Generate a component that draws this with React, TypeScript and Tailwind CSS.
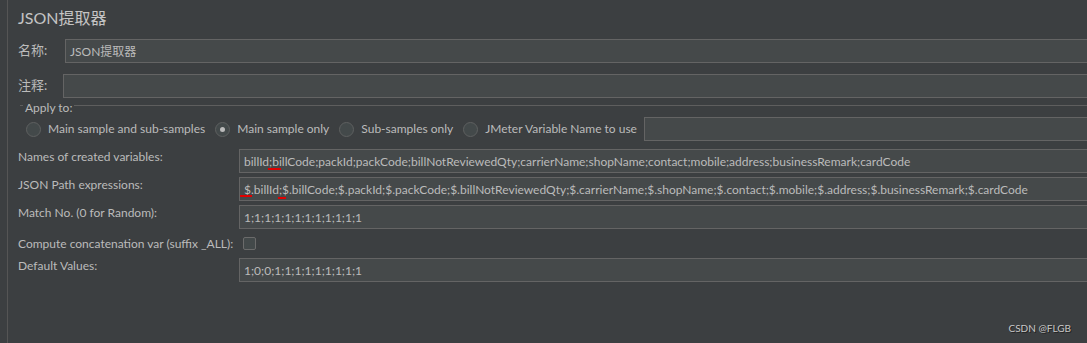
import type { ReactNode } from 'react';

const FONT = { fontFamily: 'Lato, "Noto Sans CJK SC", sans-serif' };

const NAMES_REST =
  'billCode;packId;packCode;billNotReviewedQty;carrierName;shopName;contact;mobile;address;businessRemark;cardCode';
const PATHS_REST =
  '$.billCode;$.packId;$.packCode;$.billNotReviewedQty;$.carrierName;$.shopName;$.contact;$.mobile;$.address;$.businessRemark;$.cardCode';

function Field({ children }: { children?: ReactNode }) {
  return (
    <div className="flex h-[24px] flex-1 items-center border-y border-l border-[#646464] bg-[#45494a] pt-[2px] pl-[4px] text-[12px] whitespace-nowrap text-[#bbbbbb]">
      {children}
    </div>
  );
}

// red hand-drawn marks from the screenshot
function Marked({ text, width, offset = 0, top = 14 }: { text: string; width: number; offset?: number; top?: number }) {
  return (
    <span className="relative">
      {text}
      <span
        className="absolute h-[2px] bg-[#e00000]"
        style={{ left: offset, width, top }}
      />
    </span>
  );
}

function Radio({ label, checked = false }: { label: string; checked?: boolean }) {
  return (
    <div className="flex items-center gap-[7px]">
      <span className="flex h-[15px] w-[15px] items-center justify-center rounded-full border border-[#5e6060] bg-[#43494a]">
        {checked && <span className="h-[5px] w-[5px] rounded-full bg-[#bbbbbb]" />}
      </span>
      <span>{label}</span>
    </div>
  );
}

function Row({ label, children }: { label: string; children: ReactNode }) {
  return (
    <div className="flex h-[24px] items-start">
      <span className="w-[221px] shrink-0 leading-[16px] whitespace-nowrap">{label}</span>
      {children}
    </div>
  );
}

export default function App() {
  return (
    <div
      className="relative flex h-[343px] w-[1087px] overflow-hidden bg-[#3c3f41] text-[12px] text-[#bbbbbb]"
      style={FONT}
    >
      {/* splitter */}
      <div className="w-[7px] shrink-0" />
      <div className="w-px shrink-0 bg-[#555555]" />

      <div className="flex flex-1 flex-col pl-[10px]">
        <div className="flex h-[36px] items-center text-[16px] text-[#c4c4c4]">JSON提取器</div>

        <div className="mt-[3px] flex h-[24px] items-center">
          <span className="w-[47px] shrink-0 text-[13px]">名称:</span>
          <Field>JSON提取器</Field>
        </div>

        <div className="mt-[11px] flex h-[24px] items-center">
          <span className="w-[45px] shrink-0 text-[13px]">注释:</span>
          <Field />
        </div>

        {/* Apply to: titled border */}
        <div className="flex h-[15px] items-center">
          <span className="ml-[2px] h-px w-[3px] bg-[#5e5e5e]" />
          <span className="mt-[3px] px-[2px] leading-[15px]">Apply to:</span>
          <span className="h-px flex-1 bg-[#5e5e5e]" />
        </div>

        <div className="mt-[4px] flex h-[24px] items-center pl-[8px]">
          <div className="flex items-center gap-[10px]">
            <Radio label="Main sample and sub-samples" />
            <Radio label="Main sample only" checked />
            <Radio label="Sub-samples only" />
            <Radio label="JMeter Variable Name to use" />
          </div>
          <div className="ml-[7px] flex flex-1">
            <Field />
          </div>
        </div>

        <div className="mt-[8px] flex flex-col gap-[4px]">
          <Row label="Names of created variables:">
            <Field>
              billId
              <Marked text=";" width={13} offset={-1} top={15} />
              {NAMES_REST}
            </Field>
          </Row>
          <Row label="JSON Path expressions:">
            <Field>
              <Marked text="$." width={12} offset={-4} top={14} />
              billId
              <Marked text=";" width={8} offset={-1} top={16} />
              {PATHS_REST}
            </Field>
          </Row>
          <Row label="Match No. (0 for Random):">
            <Field>1;1;1;1;1;1;1;1;1;1;1;1</Field>
          </Row>
        </div>

        <div className="flex h-[29px] items-center">
          <span className="w-[225px] shrink-0 whitespace-nowrap">Compute concatenation var (suffix _ALL):</span>
          <span className="h-[13px] w-[13px] rounded-[2px] border border-[#6b6b6b] bg-[#43494a]" />
        </div>

        <Row label="Default Values:">
          <Field>1;0;0;1;1;1;1;1;1;1;1;1</Field>
        </Row>
      </div>

      <span className="absolute right-[16px] bottom-[7px] text-[10px] text-[#c8c8c8] [text-shadow:1px_1px_0_#222]">
        CSDN @FLGB
      </span>
    </div>
  );
}
